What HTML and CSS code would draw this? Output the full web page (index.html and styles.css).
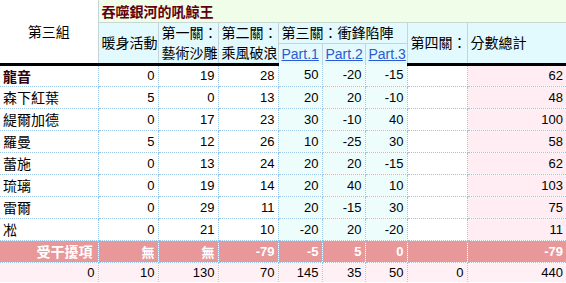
FILE: index.html
```html
<!DOCTYPE html>
<html>
<head>
<meta charset="utf-8">
<link rel="stylesheet" href="styles.css">
</head>
<body>
<table class="score">
  <colgroup>
    <col class="c-name"><col class="c60"><col class="c60"><col class="c60">
    <col class="c44"><col class="c43"><col class="c42"><col class="c60"><col class="c-total">
  </colgroup>
  <thead>
    <tr class="title-row">
      <th rowspan="3" class="group">第三組</th>
      <th colspan="8" class="title">吞噬銀河的吼鯨王</th>
    </tr>
    <tr class="head1">
      <th rowspan="2" class="hd">暖身活動</th>
      <th rowspan="2" class="hd">第一關：<br>藝術沙雕</th>
      <th rowspan="2" class="hd">第二關：<br>乘風破浪</th>
      <th colspan="3" class="hd">第三關：衝鋒陷陣</th>
      <th rowspan="2" class="hd">第四關：</th>
      <th rowspan="2" class="hd">分數總計</th>
    </tr>
    <tr class="head2">
      <th class="hd part"><a href="#">Part.1</a></th>
      <th class="hd part"><a href="#">Part.2</a></th>
      <th class="hd part"><a href="#">Part.3</a></th>
    </tr>
  </thead>
  <tbody>
    <tr><td class="name lead">龍音</td><td>0</td><td>19</td><td>28</td><td class="pc">50</td><td class="pc">-20</td><td class="pc">-15</td><td></td><td class="tot">62</td></tr>
    <tr><td class="name">森下紅葉</td><td>5</td><td>0</td><td>13</td><td class="pc">20</td><td class="pc">20</td><td class="pc">-10</td><td></td><td class="tot">48</td></tr>
    <tr><td class="name">緹爾加德</td><td>0</td><td>17</td><td>23</td><td class="pc">30</td><td class="pc">-10</td><td class="pc">40</td><td></td><td class="tot">100</td></tr>
    <tr><td class="name">羅曼</td><td>5</td><td>12</td><td>26</td><td class="pc">10</td><td class="pc">-25</td><td class="pc">30</td><td></td><td class="tot">58</td></tr>
    <tr><td class="name">蕾施</td><td>0</td><td>13</td><td>24</td><td class="pc">20</td><td class="pc">20</td><td class="pc">-15</td><td></td><td class="tot">62</td></tr>
    <tr><td class="name">琉璃</td><td>0</td><td>19</td><td>14</td><td class="pc">20</td><td class="pc">40</td><td class="pc">10</td><td></td><td class="tot">103</td></tr>
    <tr><td class="name">雷爾</td><td>0</td><td>29</td><td>11</td><td class="pc">20</td><td class="pc">-15</td><td class="pc">30</td><td></td><td class="tot">75</td></tr>
    <tr><td class="name">凇</td><td>0</td><td>21</td><td>10</td><td class="pc">-20</td><td class="pc">20</td><td class="pc">-20</td><td></td><td class="tot">11</td></tr>
    <tr class="penalty"><td>受干擾項</td><td>無</td><td>無</td><td>-79</td><td>-5</td><td>5</td><td>0</td><td></td><td>-79</td></tr>
    <tr class="sum"><td>0</td><td>10</td><td>130</td><td>70</td><td>145</td><td>35</td><td>50</td><td>0</td><td>440</td></tr>
  </tbody>
</table>
</body>
</html>
```
FILE: styles.css
```css
html, body {
  margin: 0;
  padding: 0;
  background: #ffffff;
}
.score {
  border-collapse: collapse;
  table-layout: fixed;
  width: 566px;
  font-family: Arial, "Liberation Sans", "Noto Sans CJK TC", sans-serif;
  font-size: 13px;
  color: #000;
}
.c-name { width: 98px; }
.c60 { width: 60px; }
.c44 { width: 44px; }
.c43 { width: 43px; }
.c42 { width: 42px; }
.c-total { width: 99px; }

.score th, .score td {
  padding: 0 3px;
  overflow: hidden;
  white-space: nowrap;
}
.group {
  font-weight: normal;
  background: #ffffff;
  text-align: center;
  vertical-align: middle;
  border-right: 1px solid #c4d4d8;
  font-size: 14px;
}
.title-row { height: 22px; }
.title {
  background: #f0fde8;
  color: #600010;
  font-weight: bold;
  font-size: 14px;
  text-align: left;
  padding-left: 2px;
  border-bottom: 1px solid #c8d8d0;
}
.head1 { height: 21px; }
.head2 { height: 19px; }
.hd {
  background: #e2f9fd;
  font-weight: normal;
  text-align: left;
  font-size: 14px;
  line-height: 20px;
  border-left: 1px solid #c4d4d8;
  border-right: 1px solid #c4d4d8;
  border-bottom: 1px solid #c4d4d8;
  vertical-align: middle;
}
.head2 .hd { border-bottom: none; }
.part { padding-left: 2px; }
.part a {
  color: #2c5ad0;
  text-decoration: underline;
  font-size: 14px;
}
thead tr:last-child th, .head1 th[rowspan] {
  border-bottom: 3px solid #000;
}
.group { border-bottom: 3px solid #000; }

tbody tr { height: 22px; }
tbody td {
  text-align: right;
  border: 1px dotted #9cc4e4;
  padding: 0 3px 0 2px;
}
tbody td:first-child { border-left: none; }
tbody td:last-child { border-right: none; }
tbody tr:first-child td { border-top: none; }
td.name {
  text-align: left;
  padding-left: 3px;
  font-size: 14px;
}
td.lead {
  font-weight: bold;
  color: #300010;
}
td.pc { background: #ecfdfc; }
td.tot { background: #ffedf3; }
tr.penalty td {
  background: #e89898;
  color: #ffffff;
  font-weight: bold;
}
tr.penalty td:first-child { font-size: 14px; padding-right: 5px; }
tr.sum { height: 20px; }
tr.sum td {
  background: #fff0f5;
  border-bottom: none;
}
```
